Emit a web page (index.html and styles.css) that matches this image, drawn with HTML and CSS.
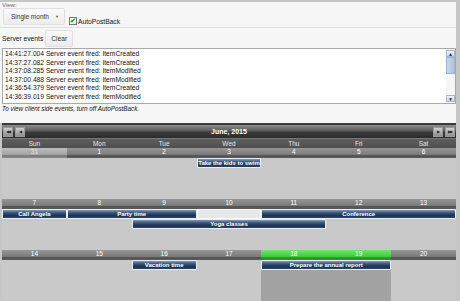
FILE: index.html
```html
<!DOCTYPE html>
<html lang="en">
<head>
    <meta charset="UTF-8">
    <title>Scheduler - server events</title>
    <link rel="stylesheet" href="styles.css">
</head>
<body>
    <div class="frame">
        <div class="options">
            <div class="view-label">View:</div>
            <div class="view-row">
                <div class="dropdown"><span>Single month</span><span class="arrow">&#9660;</span></div>
                <label class="check"><span class="box">&#10004;</span>AutoPostBack</label>
            </div>
            <div class="events-row">
                <span>Server events</span>
                <button class="clear-btn">Clear</button>
            </div>
            <div class="log">
                <div class="log-lines">
                    <div>14:41:27.004 Server event fired: ItemCreated</div>
                    <div>14:37:27.082 Server event fired: ItemCreated</div>
                    <div>14:37:08.285 Server event fired: ItemModified</div>
                    <div>14:37:00.488 Server event fired: ItemModified</div>
                    <div>14:36:54.379 Server event fired: ItemCreated</div>
                    <div>14:36:39.019 Server event fired: ItemModified</div>
                </div>
                <div class="scrollbar">
                    <span class="sb-btn">&#9650;</span>
                    <span class="sb-thumb"></span>
                    <span class="sb-track"></span>
                    <span class="sb-btn">&#9660;</span>
                </div>
            </div>
            <div class="note">To view client side events, turn off AutoPostBack.</div>
        </div>

        <div class="calendar">
            <div class="cal-title">
                <div class="nav">
                    <span class="nav-btn">&#9664;&#9664;</span>
                    <span class="nav-btn">&#9664;</span>
                </div>
                <div class="month">June, 2015</div>
                <div class="nav">
                    <span class="nav-btn">&#9654;</span>
                    <span class="nav-btn">&#9654;&#9654;</span>
                </div>
            </div>
            <div class="day-names">
                <span>Sun</span><span>Mon</span><span>Tue</span><span>Wed</span><span>Thu</span><span>Fri</span><span>Sat</span>
            </div>

            <div class="week">
                <span class="date other">31</span>
                <span class="date">1</span>
                <span class="date">2</span>
                <span class="date">3</span>
                <span class="date">4</span>
                <span class="date">5</span>
                <span class="date">6</span>
                <div class="event ev-r1" style="grid-column: 4 / 5">Take the kids to swim</div>
            </div>

            <div class="week">
                <span class="date">7</span>
                <span class="date">8</span>
                <span class="date">9</span>
                <span class="date">10</span>
                <span class="date">11</span>
                <span class="date">12</span>
                <span class="date">13</span>
                <div class="event ev-r1" style="grid-column: 1 / 2">Call Angela</div>
                <div class="event ev-r1" style="grid-column: 2 / 4">Party time</div>
                <div class="slot ev-r1" style="grid-column: 4 / 5"></div>
                <div class="event ev-r1" style="grid-column: 5 / 8">Conference</div>
                <div class="event ev-r2" style="grid-column: 3 / 6">Yoga classes</div>
            </div>

            <div class="week">
                <span class="date">14</span>
                <span class="date">15</span>
                <span class="date">16</span>
                <span class="date">17</span>
                <span class="date today">18</span>
                <span class="date today">19</span>
                <span class="date">20</span>
                <div class="busy" style="grid-column: 5 / 7"></div>
                <div class="event ev-r1" style="grid-column: 3 / 4">Vacation time</div>
                <div class="event ev-r1" style="grid-column: 5 / 7">Prepare the annual report</div>
            </div>
        </div>
    </div>
</body>
</html>
```

FILE: styles.css
```css
* {
    box-sizing: border-box;
    margin: 0;
    padding: 0;
}

body {
    font-family: 'Liberation Sans', Arial, sans-serif;
    font-size: 6.7px;
    background-color: #c6c6c6;
    overflow: hidden;
}

.frame {
    width: 456px;
    margin-top: 2px;
}

.options {
    background-color: #f6f6f6;
    height: 121px;
    color: #222;
}

.view-label {
    height: 7px;
    line-height: 6px;
    font-size: 6px;
    padding-left: 2px;
    color: #666;
}

.view-row {
    display: flex;
    align-items: flex-end;
    gap: 4px;
    padding-left: 3px;
    height: 17px;
    border-bottom: 1px solid #dedede;
    padding-bottom: 1px;
    box-sizing: content-box;
}

.dropdown {
    flex: none;
    width: 62px;
    height: 17px;
    display: flex;
    align-items: center;
    justify-content: space-between;
    padding: 0 5px 0 7px;
    border: 1px solid #e0e0e0;
    border-radius: 2px;
    background: linear-gradient(#fbfbfb, #ececec);
    color: #333;
    font-size: 6.5px;
    margin-bottom: 1px;
}

.dropdown .arrow {
    font-size: 4px;
    color: #555;
}

.check {
    display: flex;
    align-items: center;
    gap: 1px;
    color: #111;
    margin-bottom: 1px;
}

.check .box {
    width: 8px;
    height: 8px;
    border: 1px solid #777;
    background-color: #fff;
    color: #1a9a1a;
    font-size: 7px;
    line-height: 6px;
    text-align: center;
    font-weight: bold;
}

.events-row {
    display: flex;
    align-items: center;
    gap: 2px;
    padding: 2px 0 1px 2px;
    color: #111;
}

.clear-btn {
    font-family: inherit;
    font-size: 6.7px;
    width: 28px;
    height: 17px;
    border: 1px solid #e0e0e0;
    border-radius: 2px;
    background: linear-gradient(#fbfbfb, #ebebeb);
    color: #333;
}

.log {
    display: flex;
    margin-left: 2px;
    width: 454px;
    height: 56px;
    border: 1px solid #a9a9a9;
    background-color: #fff;
}

.log-lines {
    flex: 1;
    padding: 1px 0 0 2px;
    line-height: 8.5px;
    color: #111;
}

.scrollbar {
    width: 9px;
    display: flex;
    flex-direction: column;
    padding: 1px 0;
    background-color: #f6f6f6;
}

.sb-btn {
    height: 7px;
    font-size: 5px;
    line-height: 7px;
    text-align: center;
    color: #234;
    background: linear-gradient(#eef3fb, #c9d6ea);
    border: 1px solid #a9b7cf;
}

.sb-thumb {
    height: 17px;
    background: linear-gradient(90deg, #c7d6ef, #aec2e3);
    border: 1px solid #9fb3d6;
}

.sb-track {
    flex: 1;
}

.note {
    font-style: italic;
    font-size: 6.3px;
    padding: 1px 0 0 2px;
    color: #111;
}

.calendar {
    margin-left: 2px;
    width: 454px;
    border-top: 2px solid #3a3a3a;
}

.cal-title {
    display: flex;
    align-items: center;
    justify-content: space-between;
    height: 13px;
    padding: 0 1px;
    background: linear-gradient(#8d8d8d, #5c5c5c 45%, #3a3a3a 55%, #2c2c2c);
}

.nav {
    display: flex;
    gap: 2px;
}

.nav-btn {
    width: 10px;
    height: 10px;
    font-size: 4px;
    line-height: 8px;
    text-align: center;
    letter-spacing: -1px;
    color: #222;
    border: 1px solid #9a9a9a;
    background: linear-gradient(#cfcfcf, #8f8f8f);
}

.month {
    color: #fff;
    font-weight: bold;
    font-size: 7px;
}

.day-names {
    display: grid;
    grid-template-columns: repeat(7, 1fr);
    height: 10px;
    line-height: 10px;
    text-align: center;
    color: #e6e6e6;
    font-size: 6.5px;
    background: linear-gradient(#5e5e5e, #4f4f4f);
    border-top: 1px solid #777;
}

.week {
    display: grid;
    grid-template-columns: repeat(7, 1fr);
    grid-template-rows: 10px 10px 10px 1fr;
    height: 51px;
    background-color: #c9c9c9;
}

.date {
    grid-row: 1;
    text-align: center;
    line-height: 7px;
    color: #fff;
    font-size: 6.5px;
    background: linear-gradient(#969696, #7b7b7b 65%, #535353 70%, #5a5a5a);
}

.date.other {
    background: linear-gradient(#bdbdbd, #a4a4a4 65%, #7c7c7c 70%, #858585);
    color: #e2e2e2;
}

.date.today {
    background: linear-gradient(#6fe56f, #3fcd3f 65%, #2a9a2a 70%, #3a8a3a);
}

.event {
    align-self: end;
    height: 10px;
    margin-top: 1px;
    line-height: 8px;
    text-align: center;
    font-weight: bold;
    font-size: 6px;
    color: #fff;
    border: 1px solid #e6edf5;
    border-radius: 1px;
    background: linear-gradient(#7f9bbf, #3b5677 35%, #1d3350 70%, #2b4666);
    white-space: nowrap;
    overflow: hidden;
}

.ev-r1 {
    grid-row: 2;
}

.ev-r2 {
    grid-row: 3;
}

.slot {
    align-self: end;
    height: 10px;
    background-color: #e8e8e8;
    border: 1px solid #fafafa;
}

.busy {
    grid-row: 2 / 5;
    background-color: #a3a3a3;
}
```
